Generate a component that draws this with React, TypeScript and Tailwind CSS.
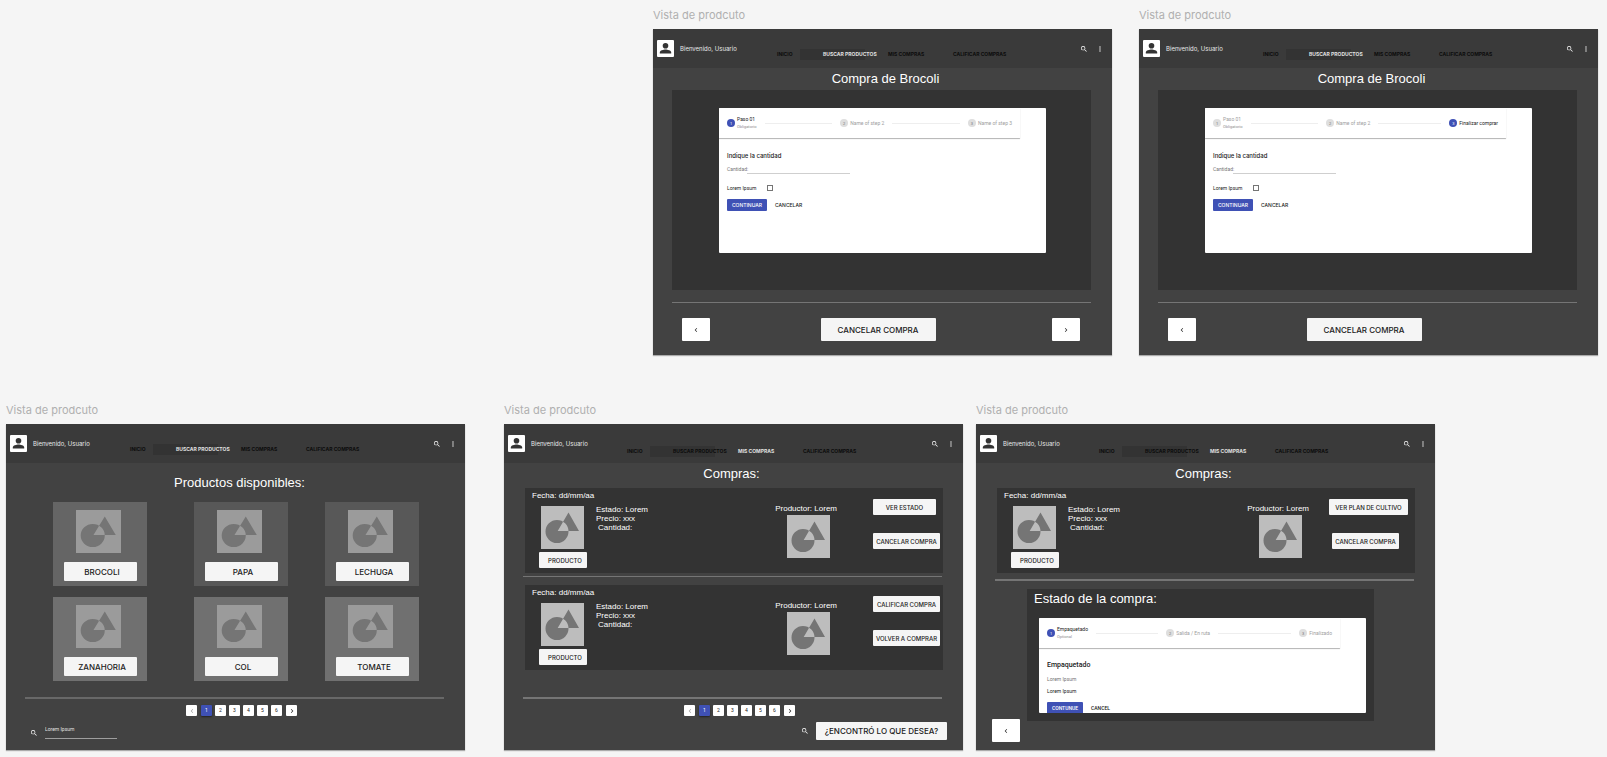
import type { ReactNode } from "react";

const navItems = ["INICIO", "BUSCAR PRODUCTOS", "MIS COMPRAS", "CALIFICAR COMPRAS"];

function SearchIcon() {
  return (
    <svg viewBox="0 0 24 24" className="size-2 shrink-0" fill="currentColor" aria-hidden="true">
      <path d="M15.5 14h-.79l-.28-.27A6.47 6.47 0 0 0 16 9.5 6.5 6.5 0 1 0 9.5 16c1.61 0 3.09-.59 4.23-1.57l.27.28v.79l5 4.99L20.49 19l-4.99-5zm-6 0a4.5 4.5 0 1 1 0-9 4.5 4.5 0 0 1 0 9z" />
    </svg>
  );
}

function DotsIcon() {
  return (
    <svg viewBox="0 0 24 24" className="size-2 shrink-0" fill="currentColor" aria-hidden="true">
      <path d="M12 8a2 2 0 1 0 0-4 2 2 0 0 0 0 4zm0 2a2 2 0 1 0 0 4 2 2 0 0 0 0-4zm0 6a2 2 0 1 0 0 4 2 2 0 0 0 0-4z" />
    </svg>
  );
}

function Chevron({ dir }: { dir: "left" | "right" }) {
  return (
    <svg viewBox="0 0 24 24" className="size-2" fill="currentColor" aria-hidden="true">
      <path
        d={
          dir === "left"
            ? "M15.4 7.4 14 6l-6 6 6 6 1.4-1.4-4.6-4.6z"
            : "M10 6 8.6 7.4l4.6 4.6-4.6 4.6L10 18l6-6z"
        }
      />
    </svg>
  );
}

function Placeholder({ className }: { className: string }) {
  return (
    <svg viewBox="0 0 43 43" preserveAspectRatio="none" className={className} role="img" aria-label="Imagen">
      <rect width="43" height="43" fill="currentColor" />
      <path
        fillRule="evenodd"
        fill="#757575"
        d="M4.5 25.5a11.5 11.5 0 1 0 23 0a11.5 11.5 0 1 0 -23 0zM27.5 6.5L38 25H16.7z"
      />
    </svg>
  );
}

function Frame({ active, children }: { active: number; children: ReactNode }) {
  return (
    <section className="flex min-w-0 flex-1 flex-col">
      <h2 className="flex h-[29px] items-center pt-px font-['Inter',sans-serif] text-[11px] leading-4 text-[#b0b0b0]">
        Vista de prodcuto
      </h2>
      <div className="flex min-h-[326px] flex-col bg-[#424242] shadow-[0_1px_1px_rgba(0,0,0,0.3)]">
        <header className="flex h-[39px] items-center bg-[#3a3a3a] pr-2 pl-1 text-white">
          <svg viewBox="0 0 17 17" className="size-[17px] shrink-0" role="img" aria-label="Usuario">
            <rect width="17" height="17" rx="1" fill="#fff" />
            <circle cx="8.5" cy="5.8" r="2.8" fill="#333" />
            <path d="M2.8 13.6v-1.2c0-2 3.8-2.9 5.7-2.9s5.7.9 5.7 2.9v1.2z" fill="#333" />
          </svg>
          <span className="w-24 shrink-0 pl-1.5 font-['Inter',sans-serif] text-[6px] leading-2 text-[#e8e8e8]">
            Bienvenido, Usuario
          </span>
          <nav
            className={
              active === 1
                ? "mt-3 flex h-[11px] flex-1 items-center pl-[7px]"
                : "mt-4 flex h-[11px] flex-1 items-center pl-1.5"
            }
          >
            {navItems.map((item, i) => (
              <a
                key={item}
                href="#"
                className={[
                  "flex h-[11px] shrink-0 items-center whitespace-nowrap font-['Inter',sans-serif] text-[5px] leading-none font-bold",
                  i === active ? "text-[#e0e0e0]" : "text-[#0c0c0c]",
                  i === 0 ? "w-[23px]" : "",
                  i === 1 ? "mr-[23px] w-[65px] bg-[#333333] pl-[23px]" : "",
                  i === 2 ? "w-[65px]" : "",
                ].join(" ")}
              >
                {item}
              </a>
            ))}
          </nav>
          <button aria-label="Buscar" className="mr-2">
            <SearchIcon />
          </button>
          <button aria-label="Más opciones">
            <DotsIcon />
          </button>
        </header>
        {children}
      </div>
    </section>
  );
}

const cardButton =
  "flex shrink-0 items-center justify-center rounded-[1px] bg-[#f5f5f5] whitespace-nowrap font-['Inter',sans-serif] font-medium text-[#212121]";

function SquareButton({ dir }: { dir: "left" | "right" }) {
  return (
    <button
      aria-label={dir === "left" ? "Anterior" : "Siguiente"}
      className="flex h-[23px] w-7 items-center justify-center rounded-[1px] bg-white text-[#212121]"
    >
      <Chevron dir={dir} />
    </button>
  );
}

function Stepper({ steps, active, note }: { steps: string[]; active: number; note: string }) {
  return (
    <ol className="mr-[26px] flex h-[30px] items-center rounded-tl-[1px] bg-white px-2 font-['Roboto',sans-serif] text-[5px] leading-[7px] shadow-[0_1px_1px_rgba(0,0,0,0.3)]">
      {steps.map((step, i) => (
        <li key={step} className={i === 0 ? "flex items-center" : "flex flex-1 items-center"}>
          {i > 0 && <span className="mx-2 h-px flex-1 bg-[#eeeeee]" />}
          <span
            className={
              i === active
                ? "mr-0.5 flex size-2 items-center justify-center rounded-full bg-[#3f51b5] text-[4px] text-white"
                : "mr-0.5 flex size-2 items-center justify-center rounded-full bg-[#dedede] text-[4px] text-[#757575]"
            }
          >
            {i + 1}
          </span>
          <span className={i === active ? "whitespace-nowrap text-[#212121]" : "whitespace-nowrap text-[#9e9e9e]"}>
            {step}
            {i === 0 && <small className="block text-[4px] leading-[7px] text-[#8d8d8d]">{note}</small>}
          </span>
        </li>
      ))}
    </ol>
  );
}

function PurchaseFrame({ id, steps, active, last }: { id: string; steps: string[]; active: number; last?: boolean }) {
  return (
    <Frame active={1}>
      <h1 className="mt-[3px] pl-1.5 text-center text-[13px] leading-4 text-white">Compra de Brocoli</h1>
      <div className="mt-[3px] mr-[21px] ml-[19px] bg-[#333333] pt-[18px] pr-[45px] pb-[37px] pl-[47px]">
        <form className="h-[145px] rounded-[1px] bg-white" onSubmit={(e) => e.preventDefault()}>
          <Stepper steps={steps} active={active} note="Obligatorio" />
          <div className="px-2 pt-3.5 font-['Roboto',sans-serif] text-[5px] text-[#212121]">
            <h3 className="font-['Inter',sans-serif] text-[6px] leading-2 font-medium">Indique la cantidad</h3>
            <div className="mt-1.5 flex h-2 items-end">
              <label htmlFor={id + "-cantidad"} className="w-5 pb-0.5 leading-none text-[#757575]">
                Cantidad:
              </label>
              <input id={id + "-cantidad"} className="h-2 w-[103px] border-b border-[#cfcfcf] outline-none" />
            </div>
            <div className="mt-2.5 flex h-2 items-center">
              <label htmlFor={id + "-lorem"} className="w-10 leading-2">
                Lorem Ipsum
              </label>
              <input
                id={id + "-lorem"}
                type="checkbox"
                className="size-1.5 appearance-none border border-[#757575] checked:bg-[#3f51b5]"
              />
            </div>
            <div className="mt-[7px] flex items-center gap-2 font-['Inter',sans-serif] font-medium">
              <button className="h-3 w-10 rounded-[1px] bg-[#3f51b5] leading-3 text-white">CONTINUAR</button>
              <button className="h-3 leading-3">CANCELAR</button>
            </div>
          </div>
        </form>
      </div>
      <hr className="mt-3 mr-[21px] ml-[19px] border-[#757575]" />
      <div className="mt-[15px] mr-8 ml-[29px] flex items-center justify-between">
        <SquareButton dir="left" />
        <button className={cardButton + " mr-1.5 h-[23px] w-[115px] text-[8px]"}>CANCELAR COMPRA</button>
        {last ? <span className="w-7" /> : <SquareButton dir="right" />}
      </div>
    </Frame>
  );
}

function Pagination() {
  const base = "flex size-[11px] items-center justify-center rounded-[1px] text-[5px] leading-none";
  return (
    <nav
      aria-label="Paginación"
      className="mt-1.5 flex justify-center gap-[3px] pl-3 font-['Roboto',sans-serif] text-[#212121]"
    >
      <button aria-label="Anterior" className={base + " mr-px bg-white text-[#9e9e9e]"}>
        <Chevron dir="left" />
      </button>
      {[1, 2, 3, 4, 5, 6].map((n) => (
        <button
          key={n}
          className={base + (n === 1 ? " bg-[#3f51b5] text-white shadow-[0_1px_2px_rgba(0,0,0,0.5)]" : " bg-white")}
        >
          {n}
        </button>
      ))}
      <button aria-label="Siguiente" className={base + " ml-px bg-white"}>
        <Chevron dir="right" />
      </button>
    </nav>
  );
}

const products = [
  { name: "BROCOLI", bg: "bg-[#656565]" },
  { name: "PAPA", bg: "bg-[#585858]" },
  { name: "LECHUGA", bg: "bg-[#585858]" },
  { name: "ZANAHORIA", bg: "bg-[#707070]" },
  { name: "COL", bg: "bg-[#707070]" },
  { name: "TOMATE", bg: "bg-[#707070]" },
];

function ProductsFrame() {
  return (
    <Frame active={1}>
      <h1 className="mt-3 pl-2 text-center text-[13px] leading-4 text-white">Productos disponibles:</h1>
      <div className="mt-[11px] mr-[46px] ml-[47px] grid grid-cols-[94px_94px_94px] justify-between gap-y-[11px]">
        {products.map((p, i) => (
          <article
            key={p.name}
            className={p.bg + " flex h-[84px] flex-col items-center pt-2" + (i % 3 === 1 ? " -mr-[5px] ml-[5px]" : "")}
          >
            <Placeholder className="mr-1 h-[43px] w-[45px] text-[#9b9b9b]" />
            <button className={cardButton + " mt-[9px] h-[19px] w-[73px] pl-1 text-[8px]"}>{p.name}</button>
          </article>
        ))}
      </div>
      <hr className="mt-4 mr-[21px] ml-[19px] border-t-2 border-[#686868]" />
      <Pagination />
      <div className="mt-[11px] ml-6 flex items-center gap-[7px] text-white">
        <SearchIcon />
        <input
          aria-label="Buscar producto"
          defaultValue="Lorem Ipsum"
          className="h-3 w-[72px] border-b border-[#9e9e9e] pb-2 font-['Roboto',sans-serif] text-[5px] leading-2 text-[#e0e0e0] outline-none"
        />
      </div>
    </Frame>
  );
}

function OrderCard({ actions, indent }: { actions: { label: string; width: string }[]; indent: string }) {
  return (
    <article className="mr-5 ml-[21px] flex h-[85px] items-start bg-[#333333] text-[8px] leading-[9px] text-white">
      <div className="w-[71px] shrink-0 pt-[3px]">
        <p className="pl-[7px] whitespace-nowrap">Fecha: dd/mm/aa</p>
        <Placeholder className="mt-1.5 ml-4 size-[43px] text-[#bdbdbd]" />
        <button className={cardButton + " mt-[3px] ml-3.5 h-4 w-12 pl-1 text-[6px]"}>PRODUCTO</button>
      </div>
      <div className="flex-1 pt-[17px]">
        <p>Estado: Lorem</p>
        <p>Precio: xxx</p>
        <p className="pl-0.5">Cantidad:</p>
      </div>
      <div className="flex flex-col items-center gap-0.5 pt-4">
        <p>Productor: Lorem</p>
        <Placeholder className="ml-[5px] size-[43px] text-[#bdbdbd]" />
      </div>
      <div className={"flex w-[106px] flex-col items-start gap-[18px] pt-[11px] " + indent}>
        {actions.map((a) => (
          <button key={a.label} className={cardButton + " h-4 text-[6px] " + a.width}>
            {a.label}
          </button>
        ))}
      </div>
    </article>
  );
}

function OrdersFrame() {
  return (
    <Frame active={2}>
      <h1 className="mt-[3px] mb-1.5 pr-1 text-center text-[13px] leading-4 text-white">Compras:</h1>
      <OrderCard
        indent="pl-9"
        actions={[
          { label: "VER ESTADO", width: "w-[63px]" },
          { label: "CANCELAR COMPRA", width: "w-[67px]" },
        ]}
      />
      <hr className="mt-[3px] mr-[21px] mb-2 ml-[19px] border-[#757575]" />
      <OrderCard
        indent="pl-9"
        actions={[
          { label: "CALIFICAR COMPRA", width: "w-[67px]" },
          { label: "VOLVER A COMPRAR", width: "w-[67px]" },
        ]}
      />
      <hr className="mt-[27px] mr-[21px] ml-[19px] border-t-2 border-[#757575]" />
      <Pagination />
      <div className="mt-1.5 mr-4 flex items-center justify-end gap-[7px] text-white">
        <SearchIcon />
        <button className={cardButton + " h-[18px] w-[131px] text-[8px]"}>¿ENCONTRÓ LO QUE DESEA?</button>
      </div>
    </Frame>
  );
}

function StatusFrame() {
  return (
    <Frame active={2}>
      <h1 className="mt-[3px] mb-1.5 pr-1 text-center text-[13px] leading-4 text-white">Compras:</h1>
      <OrderCard
        indent="pl-5"
        actions={[
          { label: "VER PLAN DE CULTIVO", width: "w-[79px]" },
          { label: "CANCELAR COMPRA", width: "ml-[3px] w-[67px]" },
        ]}
      />
      <hr className="mt-1.5 mr-[21px] ml-[19px] border-t-2 border-[#757575]" />
      <div className="mr-[61px] ml-4 flex items-end gap-[7px] pt-2">
        <div className="-mb-[21px]">
          <SquareButton dir="left" />
        </div>
        <div className="h-[132px] flex-1 bg-[#333333] pt-0.5 pr-2 pl-3">
          <h3 className="-ml-[5px] text-[13px] leading-4 text-white">Estado de la compra:</h3>
          <div className="mt-[11px] h-[95px] overflow-hidden rounded-[1px] bg-white">
            <Stepper steps={["Empaquetado", "Salida / En ruta", "Finalizado"]} active={0} note="Optional" />
            <div className="px-2 pt-[13px] font-['Roboto',sans-serif] text-[5px] leading-2 text-[#212121]">
              <h4 className="text-[7px] font-medium">Empaquetado</h4>
              <p className="mt-1.5 text-[#757575]">Lorem Ipsum</p>
              <p className="mt-1">Lorem Ipsum</p>
              <div className="mt-[7px] flex items-center gap-2 font-medium">
                <button className="h-3 w-9 rounded-[1px] bg-[#3f51b5] leading-3 text-white">CONTUNUE</button>
                <button className="h-3 leading-3">CANCEL</button>
              </div>
            </div>
          </div>
        </div>
      </div>
    </Frame>
  );
}

export default function App() {
  return (
    <main className="flex min-h-screen flex-col gap-10 overflow-x-auto bg-[#f5f5f5] font-['Liberation_Sans',Arial,sans-serif]">
      <div className="flex gap-[27px] pr-[9px] pl-[653px]">
        <PurchaseFrame id="inicio" steps={["Paso 01", "Name of step 2", "Name of step 3"]} active={0} />
        <PurchaseFrame id="final" steps={["Paso 01", "Name of step 2", "Finalizar comprar"]} active={2} last />
      </div>
      <div className="flex pr-[172px] pl-1.5">
        <ProductsFrame />
        <div className="w-[39px] shrink-0" />
        <OrdersFrame />
        <div className="w-[13px] shrink-0" />
        <StatusFrame />
      </div>
    </main>
  );
}
